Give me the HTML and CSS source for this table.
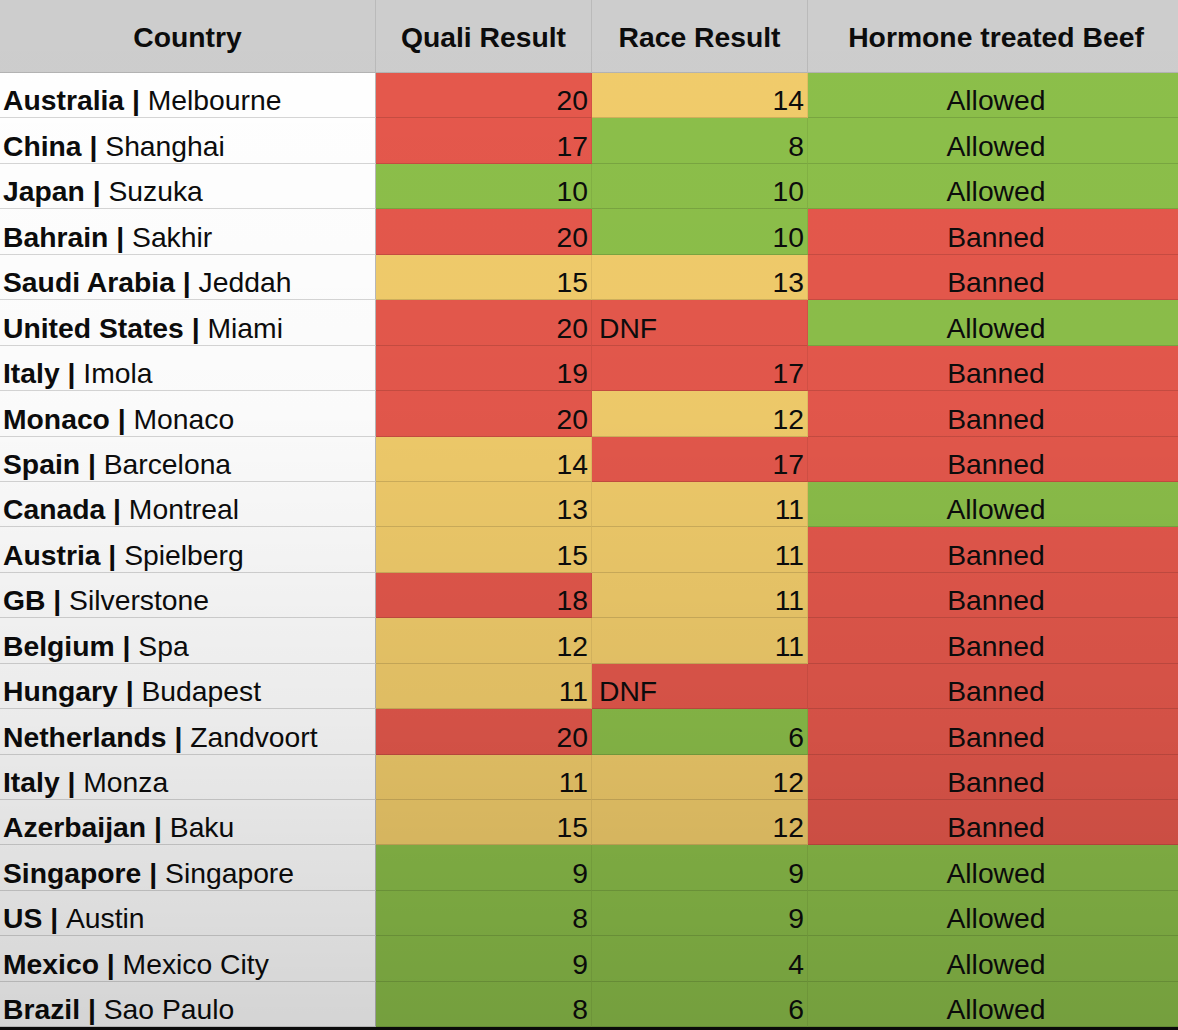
FILE: index.html
```html
<!DOCTYPE html>
<html lang="en">
<head>
<meta charset="utf-8">
<title>Hormone treated Beef</title>
<link rel="stylesheet" href="styles.css">
</head>
<body>
<div class="sheet">
  <div class="hd">Country</div>
  <div class="hd">Quali Result</div>
  <div class="hd">Race Result</div>
  <div class="hd last">Hormone treated Beef</div>

  <div class="c name"><b>Australia |</b>&nbsp;Melbourne</div><div class="c num red">20</div><div class="c num yel">14</div><div class="c ban grn">Allowed</div>
  <div class="c name"><b>China |</b>&nbsp;Shanghai</div><div class="c num red">17</div><div class="c num grn">8</div><div class="c ban grn">Allowed</div>
  <div class="c name"><b>Japan |</b>&nbsp;Suzuka</div><div class="c num grn">10</div><div class="c num grn">10</div><div class="c ban grn">Allowed</div>
  <div class="c name"><b>Bahrain |</b>&nbsp;Sakhir</div><div class="c num red">20</div><div class="c num grn">10</div><div class="c ban red">Banned</div>
  <div class="c name"><b>Saudi Arabia |</b>&nbsp;Jeddah</div><div class="c num yel">15</div><div class="c num yel">13</div><div class="c ban red">Banned</div>
  <div class="c name"><b>United States |</b>&nbsp;Miami</div><div class="c num red">20</div><div class="c dnf red">DNF</div><div class="c ban grn">Allowed</div>
  <div class="c name"><b>Italy |</b>&nbsp;Imola</div><div class="c num red">19</div><div class="c num red">17</div><div class="c ban red">Banned</div>
  <div class="c name"><b>Monaco |</b>&nbsp;Monaco</div><div class="c num red">20</div><div class="c num yel">12</div><div class="c ban red">Banned</div>
  <div class="c name"><b>Spain |</b>&nbsp;Barcelona</div><div class="c num yel">14</div><div class="c num red">17</div><div class="c ban red">Banned</div>
  <div class="c name"><b>Canada |</b>&nbsp;Montreal</div><div class="c num yel">13</div><div class="c num yel">11</div><div class="c ban grn">Allowed</div>
  <div class="c name"><b>Austria |</b>&nbsp;Spielberg</div><div class="c num yel">15</div><div class="c num yel">11</div><div class="c ban red">Banned</div>
  <div class="c name"><b>GB |</b>&nbsp;Silverstone</div><div class="c num red">18</div><div class="c num yel">11</div><div class="c ban red">Banned</div>
  <div class="c name"><b>Belgium |</b>&nbsp;Spa</div><div class="c num yel">12</div><div class="c num yel">11</div><div class="c ban red">Banned</div>
  <div class="c name"><b>Hungary |</b>&nbsp;Budapest</div><div class="c num yel">11</div><div class="c dnf red">DNF</div><div class="c ban red">Banned</div>
  <div class="c name"><b>Netherlands |</b>&nbsp;Zandvoort</div><div class="c num red">20</div><div class="c num grn">6</div><div class="c ban red">Banned</div>
  <div class="c name"><b>Italy |</b>&nbsp;Monza</div><div class="c num yel">11</div><div class="c num yel">12</div><div class="c ban red">Banned</div>
  <div class="c name"><b>Azerbaijan |</b>&nbsp;Baku</div><div class="c num yel">15</div><div class="c num yel">12</div><div class="c ban red">Banned</div>
  <div class="c name"><b>Singapore |</b>&nbsp;Singapore</div><div class="c num grn">9</div><div class="c num grn">9</div><div class="c ban grn">Allowed</div>
  <div class="c name"><b>US |</b>&nbsp;Austin</div><div class="c num grn">8</div><div class="c num grn">9</div><div class="c ban grn">Allowed</div>
  <div class="c name"><b>Mexico |</b>&nbsp;Mexico City</div><div class="c num grn">9</div><div class="c num grn">4</div><div class="c ban grn">Allowed</div>
  <div class="c name"><b>Brazil |</b>&nbsp;Sao Paulo</div><div class="c num grn">8</div><div class="c num grn">6</div><div class="c ban grn">Allowed</div>
</div>
</body>
</html>
```

FILE: styles.css
```css
html, body {
  margin: 0;
  padding: 0;
  background: #0a0a0a;
}

body {
  width: 1178px;
  height: 1030px;
  overflow: hidden;
  font-family: "Liberation Sans", Arial, sans-serif;
  color: #0c0c0c;
}

.sheet {
  position: relative;
  display: grid;
  grid-template-columns: 376px 216px 216px 370px;
  grid-template-rows: 73px repeat(21, 45.45px);
  background: #fff;
}

.sheet::after {
  content: "";
  position: absolute;
  inset: 0;
  pointer-events: none;
  background: linear-gradient(to bottom,
    rgba(0, 0, 0, 0) 0%,
    rgba(0, 0, 0, 0.02) 40%,
    rgba(0, 0, 0, 0.08) 70%,
    rgba(0, 0, 0, 0.17) 100%);
}

.hd {
  background: #cdcdcd;
  border-right: 1px solid #bababa;
  border-bottom: 1px solid #b3b3b3;
  display: flex;
  align-items: center;
  justify-content: center;
  font-weight: bold;
  font-size: 28.3px;
  padding-top: 2px;
}

.hd.last {
  border-right: none;
  padding-left: 6px;
}

.c {
  display: flex;
  align-items: flex-end;
  font-size: 28.3px;
  line-height: 32px;
  padding-bottom: 1px;
  border-bottom: 1px solid rgba(0, 0, 0, 0.13);
  border-right: 1px solid rgba(0, 0, 0, 0.07);
  white-space: nowrap;
  box-sizing: border-box;
}

.name {
  padding-left: 3px;
  background: #fff;
  border-right: 1px solid #b9b9b9;
  border-bottom: 1px solid #d6d6d6;
}

.name b {
  font-weight: bold;
}

.num {
  justify-content: flex-end;
  padding-right: 3px;
}

.dnf {
  justify-content: flex-start;
  padding-left: 7px;
}

.ban {
  justify-content: center;
  border-right: none;
  padding-left: 6px;
}

.red { background: #e5584c; }
.yel { background: #f1cc6b; }
.grn { background: #8cbf4a; }
```
